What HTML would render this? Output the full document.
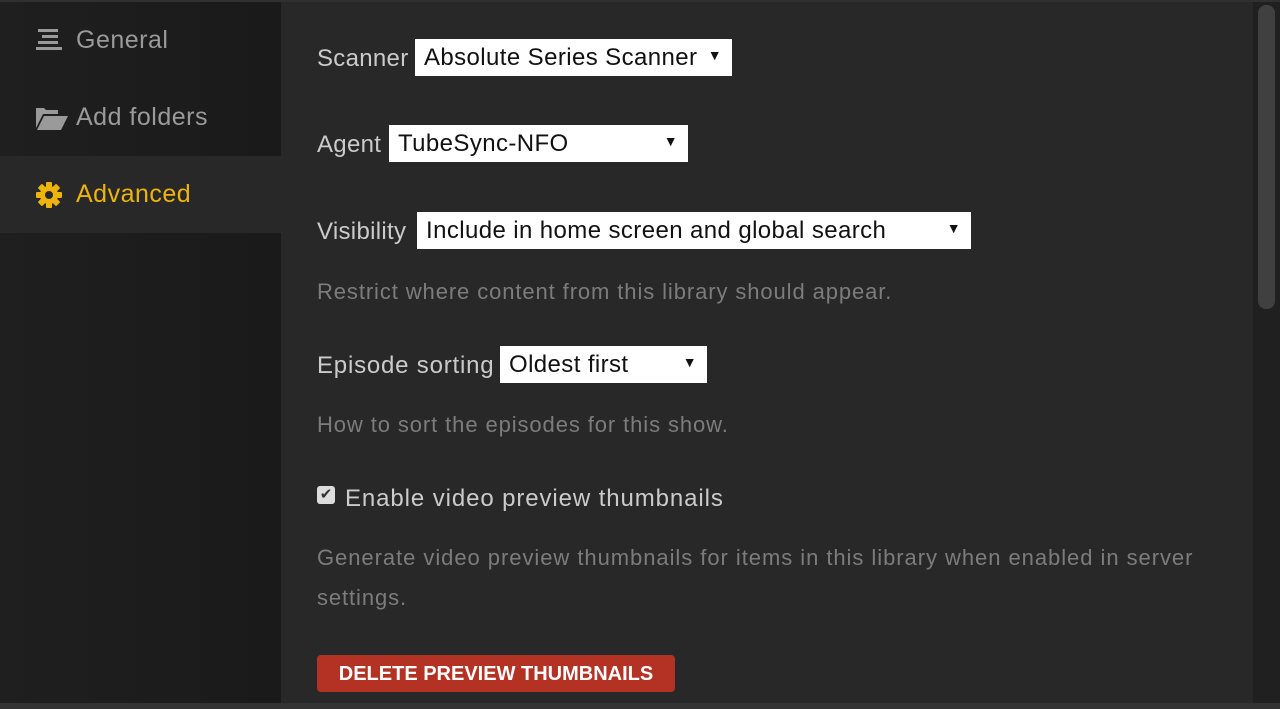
<!DOCTYPE html>
<html><head><meta charset="utf-8"><style>
*{margin:0;padding:0;box-sizing:border-box}
body{width:1280px;height:709px;overflow:hidden;background:#282828;font-family:"Liberation Sans",sans-serif;position:relative}
.top{position:absolute;left:0;top:0;width:1280px;height:2px;background:#303030}
.side{position:absolute;left:0;top:2px;width:281px;height:701px;background:linear-gradient(90deg,#1f1f1f,#1a1a1a)}
.item{position:absolute;left:0;width:281px;height:77px;font-size:25px;color:#9a9a9a;letter-spacing:0.5px}
.item span{position:absolute;left:76px;top:24px}
.act{background:#282828;color:#eeb40c}
.main{position:absolute;left:281px;top:2px;width:972px;height:701px;background:#282828}
.bar{position:absolute;left:1253px;top:2px;width:27px;height:701px;background:#202020}
.thumb{position:absolute;left:1258px;top:5px;width:17px;height:304px;border-radius:8px;background:#404040}
.bot{position:absolute;left:0;top:703px;width:1280px;height:6px;background:#333}
.t{position:absolute;font-size:24px;color:#cbcbcb;white-space:nowrap;letter-spacing:0.3px}
.h{position:absolute;font-size:22px;color:#7c7c7c;white-space:nowrap;letter-spacing:0.9px}
.sel{position:absolute;height:37px;background:#fff;color:#111;font-size:24px;padding:5px 0 0 9px;white-space:nowrap;overflow:hidden;letter-spacing:0.4px}
.sel i{position:absolute;right:10px;top:8px;font-style:normal;font-size:14px}
.btn{position:absolute;left:317px;top:655px;width:358px;height:37px;background:#b33224;border-radius:4px;color:#fff;font-weight:bold;font-size:20px;text-align:center;line-height:38px}
</style></head><body>
<div class="top"></div>
<div class="side">
 <div class="item" style="top:0"><svg style="position:absolute;left:36px;top:27px" width="26" height="23"><rect x="2" y="0" width="20" height="3" fill="#9a9a9a"/><rect x="6" y="6" width="16" height="3" fill="#9a9a9a"/><rect x="2" y="12" width="20" height="3" fill="#9a9a9a"/><rect x="0" y="18" width="26" height="3" fill="#9a9a9a"/></svg><span>General</span></div>
 <div class="item" style="top:77px"><svg style="position:absolute;left:36px;top:27px" width="32" height="24"><path d="M0 2h8l2 2h12v4H7L0 22z" fill="#9a9a9a"/><path d="M8 10h24l-7 14H1z" fill="#9a9a9a"/></svg><span>Add folders</span></div>
 <div class="item act" style="top:154px"><svg style="position:absolute;left:36px;top:26px" width="26" height="26" viewBox="0 0 26 26"><g fill="#eeb40c"><circle cx="13" cy="13" r="9"/><rect x="10" y="0" width="6" height="26" rx="1"/><rect x="0" y="10" width="26" height="6" rx="1"/><rect x="10" y="0" width="6" height="26" rx="1" transform="rotate(45 13 13)"/><rect x="10" y="0" width="6" height="26" rx="1" transform="rotate(-45 13 13)"/></g><circle cx="13" cy="13" r="4" fill="#282828"/></svg><span>Advanced</span></div>
</div>
<div class="main"></div>
<div class="bar"></div><div class="thumb"></div>
<div class="bot"></div>

<div class="t" style="left:317px;top:45px">Scanner</div>
<div class="sel" style="left:415px;top:39px;width:317px">Absolute Series Scanner<i>▼</i></div>
<div class="t" style="left:317px;top:131px">Agent</div>
<div class="sel" style="left:389px;top:125px;width:299px">TubeSync-NFO<i>▼</i></div>
<div class="t" style="left:317px;top:218px">Visibility</div>
<div class="sel" style="left:417px;top:212px;width:554px">Include in home screen and global search<i>▼</i></div>
<div class="h" style="left:317px;top:279px">Restrict where content from this library should appear.</div>
<div class="t" style="left:317px;top:352px;letter-spacing:0.8px">Episode sorting</div>
<div class="sel" style="left:500px;top:346px;width:207px">Oldest first<i>▼</i></div>
<div class="h" style="left:317px;top:412px">How to sort the episodes for this show.</div>
<div style="position:absolute;left:317px;top:486px;width:18px;height:18px;background:#ddd;border-radius:3px;color:#333;font-size:15px;line-height:18px;text-align:center">✔</div>
<div class="t" style="left:345px;top:485px;letter-spacing:0.9px">Enable video preview thumbnails</div>
<div class="h" style="left:317px;top:545px;letter-spacing:0.95px">Generate video preview thumbnails for items in this library when enabled in server</div>
<div class="h" style="left:317px;top:585px">settings.</div>
<div class="btn">DELETE PREVIEW THUMBNAILS</div>
</body></html>
